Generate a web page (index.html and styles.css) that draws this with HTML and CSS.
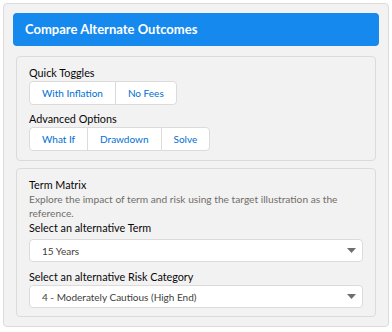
FILE: index.html
```html
<!DOCTYPE html>
<html lang="en">
<head>
  <meta charset="UTF-8" />
  <meta name="viewport" content="width=device-width, initial-scale=1.0" />
  <title>Compare Alternate Outcomes</title>
  <link rel="stylesheet" href="styles.css">
</head>
<body>
  <div class="card">
    <div class="card-header">Compare Alternate Outcomes</div>

    <div class="section">
      <div class="label">Quick Toggles</div>
      <div class="btn-group">
        <button>With Inflation</button>
        <button>No Fees</button>
      </div>

      <div class="label label-spaced">Advanced Options</div>
      <div class="btn-group">
        <button>What If</button>
        <button>Drawdown</button>
        <button>Solve</button>
      </div>
    </div>

    <div class="section section-term">
      <div class="label">Term Matrix</div>
      <p class="help">Explore the impact of term and risk using the target illustration as the reference.</p>

      <label class="label" for="term">Select an alternative Term</label>
      <div class="select-wrap select-term">
        <select id="term">
          <option>15 Years</option>
          <option>10 Years</option>
          <option>20 Years</option>
        </select>
        <svg class="caret" width="9" height="5" viewBox="0 0 9 5"><path d="M0 0h9L4.5 5z" fill="#706e6b"/></svg>
      </div>

      <label class="label label-risk" for="risk">Select an alternative Risk Category</label>
      <div class="select-wrap">
        <select id="risk">
          <option>4 - Moderately Cautious (High End)</option>
          <option>5 - Balanced</option>
        </select>
        <svg class="caret" width="9" height="5" viewBox="0 0 9 5"><path d="M0 0h9L4.5 5z" fill="#706e6b"/></svg>
      </div>
    </div>
  </div>
</body>
</html>
```

FILE: styles.css
```css
body {
  margin: 0;
  background: #ffffff;
  font-family: Lato, 'Noto Sans', sans-serif;
  font-size: 10.8px;
  color: #080707;
}

.card {
  margin: 3px;
  padding: 9px;
  border: 1px solid #dddbda;
  border-radius: 4px;
  background: #f3f2f2;
  display: flex;
  flex-direction: column;
  gap: 10px;
}

.card-header {
  background: #1589ee;
  color: #ffffff;
  font-weight: 700;
  font-size: 13px;
  height: 33px;
  line-height: 33px;
  padding-left: 12px;
  border-radius: 4px;
}

.section {
  margin: 0 3px;
  padding: 8px 12px 9px;
  border: 1px solid #dddbda;
  border-radius: 4px;
}

.section-term {
  margin-top: -3px;
  padding-bottom: 8px;
}

.label {
  display: block;
  line-height: 16px;
  color: #080707;
}

.label-spaced {
  margin-top: 6px;
}

.btn-group {
  display: flex;
}

.btn-group button {
  height: 24px;
  padding: 0 12px;
  font-family: inherit;
  font-size: 10px;
  color: #0070d2;
  background: #ffffff;
  border: 1px solid #dddbda;
  border-radius: 0;
  margin: 0;
}

.btn-group button + button {
  margin-left: -1px;
}

.btn-group button:first-child {
  border-radius: 4px 0 0 4px;
}

.btn-group button:last-child {
  border-radius: 0 4px 4px 0;
}

.help {
  margin: 0;
  font-size: 10.2px;
  line-height: 13.5px;
  color: #706e6b;
}

.select-wrap {
  position: relative;
}

.select-term {
  margin-top: 3px;
}

.select-wrap select {
  display: block;
  width: 100%;
  height: 23px;
  padding: 0 12px;
  font-family: inherit;
  font-size: 10px;
  color: #3e3e3c;
  background: #ffffff;
  border: 1px solid #dddbda;
  border-radius: 4px;
  appearance: none;
  -webkit-appearance: none;
}

.caret {
  position: absolute;
  right: 7px;
  top: 9px;
}

.label-risk {
  margin-top: 7px;
}
```
